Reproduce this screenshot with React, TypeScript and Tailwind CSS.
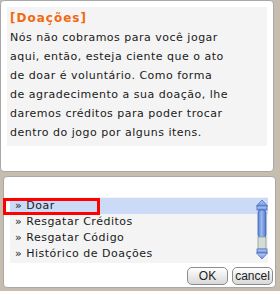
import React from "react";

const font = { fontFamily: '"DejaVu Sans", Verdana, sans-serif' };

function ScrollBar() {
  return (
    <svg width="12" height="62" viewBox="0 0 12 62" className="block">
      <defs>
        <linearGradient id="thumb" x1="0" x2="1" y1="0" y2="0">
          <stop offset="0" stopColor="#5d86d6" />
          <stop offset="0.45" stopColor="#9cb9ee" />
          <stop offset="1" stopColor="#4f78c8" />
        </linearGradient>
        <linearGradient id="arrow" x1="0" x2="0" y1="0" y2="1">
          <stop offset="0" stopColor="#b9cdf4" />
          <stop offset="1" stopColor="#6e92da" />
        </linearGradient>
      </defs>
      <polygon points="6,1 11.5,7 0.5,7" fill="url(#arrow)" stroke="#4a6fc0" strokeWidth="0.8" />
      <rect x="1" y="7" width="10" height="4" fill="url(#arrow)" stroke="#4a6fc0" strokeWidth="0.8" />
      <rect x="2" y="11" width="8" height="28" rx="3" fill="url(#thumb)" stroke="#3d62b5" strokeWidth="0.8" />
      <rect x="2" y="38" width="8" height="12" fill="#d5dcd6" stroke="#8e9a9a" strokeWidth="0.8" />
      <rect x="1" y="50" width="10" height="4" fill="url(#arrow)" stroke="#4a6fc0" strokeWidth="0.8" />
      <polygon points="0.5,54 11.5,54 6,60" fill="url(#arrow)" stroke="#4a6fc0" strokeWidth="0.8" />
    </svg>
  );
}

function Btn({ label }: { label: string }) {
  return (
    <div
      className="h-[18px] w-[41px] flex items-center justify-center rounded-[5px] border border-[#8c8c8c] bg-gradient-to-b from-white to-[#d8d8d8] text-[12px] text-[#222] leading-none"
      style={{ fontFamily: '"Liberation Sans", Arial, sans-serif' }}
    >
      {label}
    </div>
  );
}

export default function App() {
  const rows = ["Doar", "Resgatar Créditos", "Resgatar Código", "Histórico de Doações"];
  return (
    <div
      className="relative w-[280px] h-[291px] overflow-hidden bg-[#c6bdae]"
      style={font}
    >
      {/* top window */}
      <div className="w-[274px] h-[172px] rounded-[4px] border border-[#a8a8a8] bg-white p-[6px]">
        <div className="h-[139px] bg-[#f4f4f4] pl-[3px] pt-[2px] text-[11px] leading-[19px] tracking-[0.5px] text-[#1a1a1a] whitespace-nowrap">
          <div className="font-bold text-[12px] text-[#f26a0f] tracking-[1px]">[Doações]</div>
          <div>Nós não cobramos para você jogar</div>
          <div>aqui, então, esteja ciente que o ato</div>
          <div>de doar é voluntário. Como forma</div>
          <div>de agradecimento a sua doação, lhe</div>
          <div>daremos créditos para poder trocar</div>
          <div>dentro do jogo por alguns itens.</div>
        </div>
      </div>

      {/* bottom window */}
      <div className="mt-[4px] ml-[3px] w-[273px] h-[112px] rounded-[4px] border border-[#a8a8a8] bg-white pt-[20px] pl-[6px] pr-[7px]">
        <div className="relative h-[66px] bg-[#f4f4f4] pt-[1px]">
          {rows.map((r, i) => (
            <div
              key={r}
              className={
                "h-[16px] pl-[5px] flex items-center text-[11px] tracking-[0.5px] text-[#1a1a1a] whitespace-nowrap " +
                (i === 0 ? "bg-[#cbdaf7]" : "")
              }
            >
              <span className="mr-[4px]">»</span>
              {r}
            </div>
          ))}
          <div className="absolute right-0 top-[2px]">
            <ScrollBar />
          </div>
        </div>
        <div className="mt-[4px] flex justify-end gap-[4px] -mr-[5px]">
          <Btn label="OK" />
          <Btn label="cancel" />
        </div>
      </div>

      {/* red annotation box */}
      <div className="absolute left-[3px] top-[198px] w-[97px] h-[17px] border-[3px] border-[#ff0000]" />
    </div>
  );
}
